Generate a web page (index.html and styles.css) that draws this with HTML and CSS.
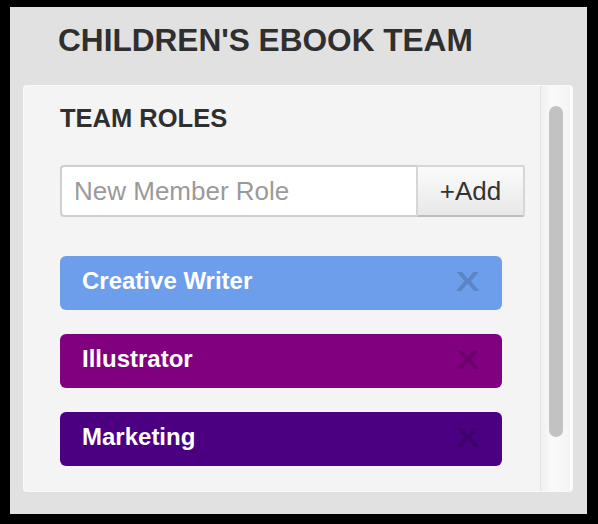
FILE: index.html
```html
<!DOCTYPE html>
<html>
<head>
<meta charset="utf-8">
<link rel="stylesheet" href="styles.css">
</head>
<body>
<div class="frame">
  <div class="board">
    <h1 class="title">CHILDREN'S EBOOK TEAM</h1>
    <div class="panel">
      <div class="content">
        <h2 class="section">TEAM ROLES</h2>
        <div class="add-row">
          <input class="role-input" type="text" placeholder="New Member Role">
          <button class="add-btn">+Add</button>
        </div>
        <ul class="roles">
          <li class="role role-blue"><span>Creative Writer</span><span class="x">X</span></li>
          <li class="role role-purple"><span>Illustrator</span><span class="x">X</span></li>
          <li class="role role-indigo"><span>Marketing</span><span class="x">X</span></li>
        </ul>
      </div>
      <div class="scrollbar"><div class="thumb"></div></div>
    </div>
  </div>
</div>
</body>
</html>
```
FILE: styles.css
```css
html, body {
  margin: 0;
  padding: 0;
  background: #000;
  width: 598px;
  height: 524px;
  overflow: hidden;
}
.frame {
  padding: 7px 11px 10px 10px;
  height: 524px;
  box-sizing: border-box;
}
.board {
  background: #e1e1e1;
  height: 507px;
  padding: 13px 15px 0 14px;
  box-sizing: border-box;
  font-family: "Liberation Sans", Arial, sans-serif;
}
.title {
  margin: 0 0 26px 34px;
  font-size: 31.6px;
  line-height: 40px;
  font-weight: bold;
  color: #2f2f2f;
}
.panel {
  display: flex;
  height: 405px;
  background: #f4f4f4;
  border-radius: 3px;
  box-shadow: 0 0 0 1px #f9f9f9;
  overflow: hidden;
}
.content {
  flex: 1;
  padding: 17px 15px 0 36px;
  overflow: hidden;
}
.section {
  margin: 0 0 32px 0;
  font-size: 25.5px;
  line-height: 30px;
  font-weight: bold;
  color: #2f2f2f;
}
.add-row {
  display: flex;
  height: 52px;
  margin-bottom: 39px;
}
.role-input {
  width: 356px;
  height: 52px;
  box-sizing: border-box;
  border: 2px solid #cfcfcf;
  border-right: none;
  border-radius: 4px 0 0 4px;
  background: #fff;
  padding: 0 12px;
  font-family: "Liberation Sans", Arial, sans-serif;
  font-size: 26px;
  color: #555;
  outline: none;
}
.role-input::placeholder {
  color: #9a9a9a;
}
.add-btn {
  flex: 1;
  height: 52px;
  box-sizing: border-box;
  border: 2px solid #d6d6d6;
  border-bottom-color: #bdbdbd;
  border-radius: 0 3px 3px 0;
  background: linear-gradient(#fbfbfb, #e8e8e8);
  font-family: "Liberation Sans", Arial, sans-serif;
  font-size: 26px;
  color: #333;
  padding: 0;
}
.roles {
  list-style: none;
  margin: 0;
  padding: 0;
  width: 442px;
}
.role {
  display: flex;
  align-items: center;
  justify-content: space-between;
  height: 54px;
  margin-bottom: 24px;
  padding: 0 22px;
  border-radius: 6px;
  color: #fff;
  font-size: 24px;
  font-weight: bold;
}
.role span:first-child {
  margin-top: -5px;
}
.role-blue { background: #6d9eeb; }
.role-purple { background: #800080; }
.role-indigo { background: #4b0082; }
.x {
  display: inline-block;
  font-size: 28px;
  font-weight: bold;
  color: rgba(0, 0, 0, 0.17);
  transform: scaleX(1.3);
  transform-origin: right center;
  margin-top: -2px;
}
.scrollbar {
  width: 32px;
  box-sizing: border-box;
  border-left: 1px solid #e3e3e3;
  border-right: 2px solid #ffffff;
  background: linear-gradient(to right, #f0f0f0, #fafafa 40%, #f4f4f4);
  padding: 20px 7px 0 8px;
}
.thumb {
  height: 331px;
  background: #c2c2c2;
  border-radius: 7px;
}
```
